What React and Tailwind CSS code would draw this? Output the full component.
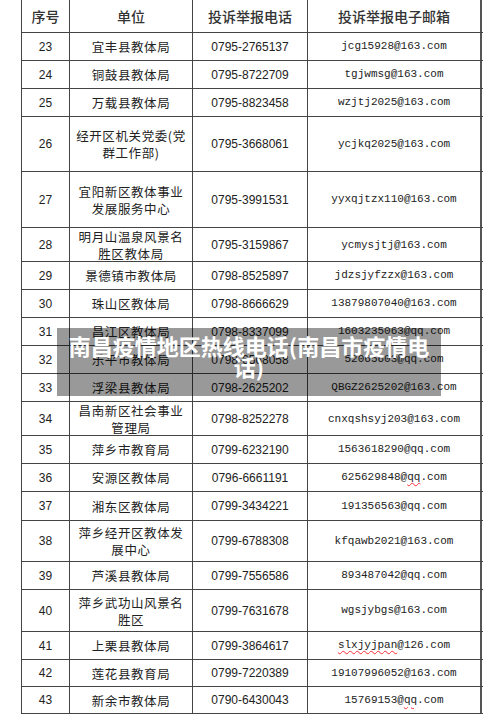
import React from "react";

const rows = [
  { no: 23, unit: ["宜丰县教体局"], tel: "0795-2765137", mail: "jcg15928@163.com", h: "h-[28px]" },
  { no: 24, unit: ["铜鼓县教体局"], tel: "0795-8722709", mail: "tgjwmsg@163.com", h: "h-[28px]" },
  { no: 25, unit: ["万载县教体局"], tel: "0795-8823458", mail: "wzjtj2025@163.com", h: "h-[28px]" },
  { no: 26, unit: ["经开区机关党委(党", "群工作部)"], tel: "0795-3668061", mail: "ycjkq2025@163.com", h: "h-[55px]" },
  { no: 27, unit: ["宜阳新区教体事业", "发展服务中心"], tel: "0795-3991531", mail: "yyxqjtzx110@163.com", h: "h-[56px]" },
  { no: 28, unit: ["明月山温泉风景名", "胜区教体局"], tel: "0795-3159867", mail: "ycmysjtj@163.com", h: "h-[34px]" },
  { no: 29, unit: ["景德镇市教体局"], tel: "0798-8525897", mail: "jdzsjyfzzx@163.com", h: "h-[28px]" },
  { no: 30, unit: ["珠山区教体局"], tel: "0798-8666629", mail: "13879807040@163.com", h: "h-[28px]" },
  { no: 31, unit: ["昌江区教体局"], tel: "0798-8337099", mail: "1603235063@qq.com", h: "h-[28px]" },
  { no: 32, unit: ["乐平市教体局"], tel: "0798-6568058", mail: "52065603@qq.com", h: "h-[28px]" },
  { no: 33, unit: ["浮梁县教体局"], tel: "0798-2625202", mail: "QBGZ2625202@163.com", h: "h-[28px]" },
  { no: 34, unit: ["昌南新区社会事业", "管理局"], tel: "0798-8252278", mail: "cnxqshsyj203@163.com", h: "h-[34px]" },
  { no: 35, unit: ["萍乡市教育局"], tel: "0799-6232190", mail: "1563618290@qq.com", h: "h-[28px]" },
  { no: 36, unit: ["安源区教体局"], tel: "0796-6661191", mail: "625629848@qq.com", h: "h-[28px]", wavy: "qq" },
  { no: 37, unit: ["湘东区教体局"], tel: "0799-3434221", mail: "191356563@qq.com", h: "h-[29px]" },
  { no: 38, unit: ["萍乡经开区教体发", "展中心"], tel: "0799-6788308", mail: "kfqawb2021@163.com", h: "h-[41px]" },
  { no: 39, unit: ["芦溪县教体局"], tel: "0799-7556586", mail: "893487042@qq.com", h: "h-[28px]" },
  { no: 40, unit: ["萍乡武功山风景名", "胜区"], tel: "0799-7631678", mail: "wgsjybgs@163.com", h: "h-[42px]" },
  { no: 41, unit: ["上栗县教体局"], tel: "0799-3864617", mail: "slxjyjpan@126.com", h: "h-[28px]", wavy: "slxjyjpan" },
  { no: 42, unit: ["莲花县教育局"], tel: "0799-7220389", mail: "19107996052@163.com", h: "h-[27px]" },
  { no: 43, unit: ["新余市教体局"], tel: "0790-6430043", mail: "15769153@qq.com", h: "h-[27px]", wavy: "qq" },
];

const cjk = "font-['Noto_Sans_CJK_SC',sans-serif]";
const cols = "grid grid-cols-[48px_123px_115px_174px]";

function Mail({ mail, wavy }) {
  if (!wavy) return mail;
  const i = mail.indexOf(wavy);
  return (
    <>
      {mail.slice(0, i)}
      <span className="underline decoration-wavy decoration-red-500 decoration-1 underline-offset-2">
        {wavy}
      </span>
      {mail.slice(i + wavy.length)}
    </>
  );
}

export default function App() {
  return (
    <div className="relative min-h-[726px] w-[500px] bg-white pl-[21px] text-[#222]">
      <div className="w-[462px] border-l border-[#444]">
        <div className={`${cols} h-[33px] border-b border-[#444] ${cjk} text-[14px] font-medium text-[#333]`}>
          <div className="flex items-center justify-center border-r border-[#444]">序号</div>
          <div className="flex items-center justify-center border-r border-[#444]">单位</div>
          <div className="flex items-center justify-center border-r border-[#444]">投诉举报电话</div>
          <div className="flex items-center justify-center border-r-2 border-[#555]">投诉举报电子邮箱</div>
        </div>
        {rows.map((r) => (
          <div key={r.no} className={`${cols} ${r.h} border-b border-[#444]`}>
            <div className="flex items-center justify-center border-r border-[#444] font-['Liberation_Sans',sans-serif] text-[12px]">
              {r.no}
            </div>
            <div className={`flex flex-col items-center justify-center border-r border-[#444] text-center ${cjk} text-[12.5px] leading-[17px] tracking-[0.6px]`}>
              {r.unit.map((u) => (
                <span key={u}>{u}</span>
              ))}
            </div>
            <div className="flex items-center justify-center border-r border-[#444] font-['Liberation_Sans',sans-serif] text-[12px]">
              {r.tel}
            </div>
            <div className="flex items-center justify-center border-r-2 border-[#555] font-['Liberation_Mono',monospace] text-[11px]">
              <Mail mail={r.mail} wavy={r.wavy} />
            </div>
          </div>
        ))}
      </div>

      <div className={`absolute left-[57px] top-[328px] flex h-[68px] w-[384px] flex-col items-center bg-black/40 pt-[7px] text-center ${cjk} text-[22px] font-bold leading-[21px] text-white`}>
        <span>南昌疫情地区热线电话(南昌市疫情电</span>
        <span>话)</span>
      </div>
    </div>
  );
}
